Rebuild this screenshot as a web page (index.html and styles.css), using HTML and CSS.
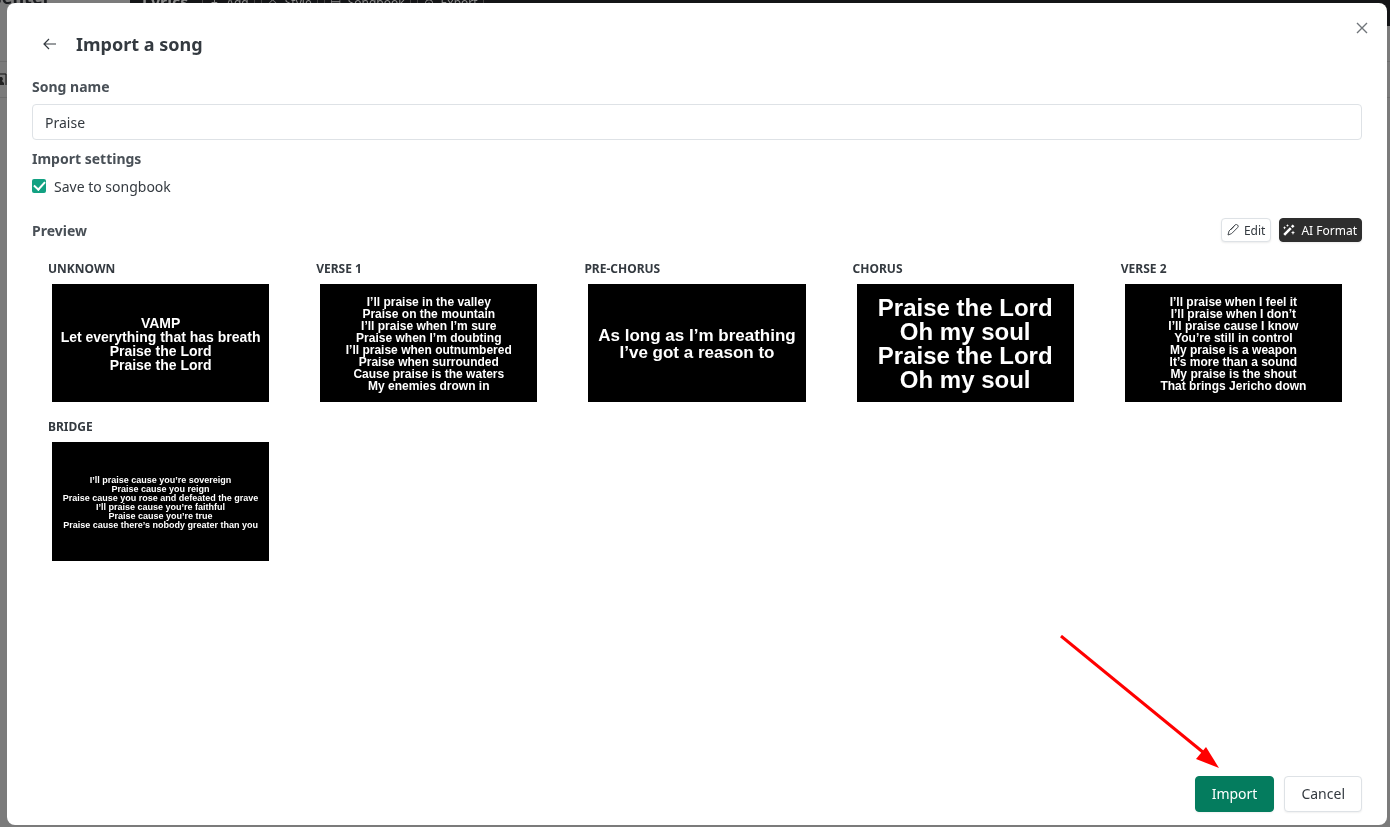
FILE: index.html
```html
<!DOCTYPE html>
<html lang="en">
<head>
  <meta charset="UTF-8">
  <meta name="viewport" content="width=device-width, initial-scale=1">
  <title>Import a song</title>
  <link rel="stylesheet" href="styles.css">
</head>

<body>

<!-- Page behind the dialog -->
<div class="page">
  <header class="topbar">
    <div class="brand">Presenter</div>
    <nav class="toolbar">
      <span class="toolbar-title">Lyrics</span>
      <button class="tool" type="button"><span>+</span>Add</button>
      <button class="tool" type="button"><span>◇</span>Style</button>
      <button class="tool" type="button"><span>▤</span>Songbook</button>
      <button class="tool" type="button"><span>⊙</span>Export</button>
    </nav>
  </header>
  <div class="side-row"></div>
  <div class="side-row side-row-icon">
    <svg width="7" height="14" viewBox="0 0 7 14"><path d="M0 1h6v11" fill="none" stroke="#111"/><path d="M0 4h2l1 2-1 2 2 2v2H0z" fill="#222"/></svg>
  </div>
</div>

<!-- Import dialog -->
<main class="modal" role="dialog" aria-labelledby="modalTitle">
  <button class="close-btn" type="button" aria-label="Close">
    <svg width="12" height="12" viewBox="0 0 12 12"><path d="M1 1l10 10M11 1L1 11"/></svg>
  </button>

  <header class="modal-header">
    <button class="back-btn" type="button" aria-label="Back">
      <svg width="14" height="12" viewBox="0 0 14 12"><path d="M13 6H1M6 1L1 6l5 5"/></svg>
    </button>
    <h1 id="modalTitle">Import a song</h1>
  </header>

  <label class="field-label" for="songName">Song name</label>
  <input class="text-input" type="text" id="songName" value="Praise">

  <h2 class="field-label settings-label">Import settings</h2>
  <div class="check-row">
    <input type="checkbox" id="saveSongbook" checked>
    <label for="saveSongbook">Save to songbook</label>
  </div>

  <div class="preview-header">
    <h2 class="field-label">Preview</h2>
    <div class="preview-actions">
      <button class="btn-small" type="button">
        <svg width="12" height="12" viewBox="0 0 12 12"><path d="M1 11l1-4 6-6a1.600 1.600 0 0 1 2.600 2.600l-6 6zM7 2.500L3.500 6" fill="none" stroke="currentColor" stroke-width=".9" stroke-linejoin="round"/></svg>
        Edit
      </button>
      <button class="btn-small btn-dark" type="button">
        <svg width="12" height="12" viewBox="0 0 12 12"><path d="M1.200 10.800l6.600-6.600M8.800 3.200l1.800-1.800" fill="none" stroke="currentColor" stroke-width="2.600"/><path d="M4.500 0l.4 1.100 1.100.4-1.100.4-.4 1.100-.4-1.100L3 1.500l1.100-.4zM1.500 2l.5 1.300 1.300.5-1.300.5-.5 1.300L1 4.300l-1-.5 1-.5zM10 6.500l.6 1.600 1.400.6-1.400.6-.6 1.600-.6-1.600L8 8.700l1.400-.6z" fill="currentColor"/></svg>
        AI Format
      </button>
    </div>
  </div>

  <section class="slides">
    <article class="card">
      <h3>UNKNOWN</h3>
      <div class="slide size-m">VAMP<br>Let everything that has breath<br>Praise the Lord<br>Praise the Lord</div>
    </article>
    <article class="card">
      <h3>VERSE 1</h3>
      <div class="slide size-s">I’ll praise in the valley<br>Praise on the mountain<br>I’ll praise when I’m sure<br>Praise when I’m doubting<br>I’ll praise when outnumbered<br>Praise when surrounded<br>Cause praise is the waters<br>My enemies drown in</div>
    </article>
    <article class="card">
      <h3>PRE-CHORUS</h3>
      <div class="slide size-l">As long as I’m breathing<br>I’ve got a reason to</div>
    </article>
    <article class="card">
      <h3>CHORUS</h3>
      <div class="slide size-xl">Praise the Lord<br>Oh my soul<br>Praise the Lord<br>Oh my soul</div>
    </article>
    <article class="card">
      <h3>VERSE 2</h3>
      <div class="slide size-s">I’ll praise when I feel it<br>I’ll praise when I don’t<br>I’ll praise cause I know<br>You’re still in control<br>My praise is a weapon<br>It’s more than a sound<br>My praise is the shout<br>That brings Jericho down</div>
    </article>
    <article class="card">
      <h3>BRIDGE</h3>
      <div class="slide size-xs">I’ll praise cause you’re sovereign<br>Praise cause you reign<br>Praise cause you rose and defeated the grave<br>I’ll praise cause you’re faithful<br>Praise cause you’re true<br>Praise cause there’s nobody greater than you</div>
    </article>
  </section>

  <footer class="modal-footer">
    <button class="btn btn-primary" type="button">Import</button>
    <button class="btn" type="button">Cancel</button>
  </footer>

  <!-- Pointer to the Import button -->
  <svg class="arrow" width="160" height="134" viewBox="0 0 160 134">
    <path d="M1 1L144 118" stroke="#f00" stroke-width="3"/>
    <path d="M159 133l-23-9 10-12z" fill="#f00"/>
  </svg>
</main>

</body>
</html>
```

FILE: styles.css
```css
* {
  box-sizing: border-box;
}
body {
  margin: 0;
  min-height: 100vh;
  font-family: "Noto Sans", sans-serif;
  font-size: 14px;
  color: #343a40;
  background: #7b7b7b;
  overflow: hidden;
}
h1, h2, h3 {
  margin: 0;
}
button, input {
  font-family: inherit;
}

/* Dimmed page, scrolled a little under the dialog */
.page {
  position: fixed;
  inset: 0;
  overflow: hidden;
}
.topbar {
  display: flex;
  height: 38px;
  margin-top: -12px;
  background: #141517;
}
.brand {
  width: 130px;
  background: #7b7b7b;
  color: #1a1b1e;
  font-size: 18px;
  line-height: 18px;
  font-weight: 700;
  text-indent: -37px;
}
.toolbar {
  display: flex;
  gap: 6px;
  padding-left: 12px;
  align-items: flex-start;
}
.toolbar-title {
  color: #8a8a8a;
  font-weight: 700;
  font-size: 16px;
  line-height: 28px;
  margin-right: 8px;
}
.tool {
  display: flex;
  align-items: center;
  gap: 6px;
  height: 28px;
  padding: 0 5px;
  background: none;
  border: 1px solid #444;
  color: #8a8a8a;
  font-size: 12px;
}
.tool span {
  width: 12px;
}
.side-row {
  height: 36px;
  border-bottom: 1px solid #6e6e6e;
}
.side-row-icon {
  display: flex;
  align-items: center;
}

/* Dialog */
.modal {
  position: fixed;
  inset: 3px 3px 2px 7px;
  display: flex;
  flex-direction: column;
  padding: 23px 25px 13px;
  background: #fff;
  border-radius: 8px;
}
.close-btn {
  position: absolute;
  top: 14px;
  right: 14px;
  display: flex;
  padding: 5px;
  border: none;
  background: none;
  cursor: pointer;
}
.close-btn svg, .back-btn svg {
  fill: none;
  stroke: #70757a;
  stroke-width: 1.4;
}
.back-btn svg {
  stroke: #343a40;
  stroke-width: 1.2;
}
.modal-header {
  display: flex;
  align-items: center;
  gap: 8px;
  height: 36px;
  margin-bottom: 13px;
}
.back-btn {
  display: flex;
  align-items: center;
  justify-content: center;
  width: 36px;
  height: 36px;
  padding: 0;
  border: none;
  background: none;
  cursor: pointer;
}
.modal-header h1 {
  font-size: 18px;
  line-height: 28px;
}
.field-label {
  font-size: 14px;
  line-height: 24px;
  font-weight: 700;
  color: #495057;
}
.text-input {
  height: 36px;
  margin-top: 5px;
  padding: 0 12px;
  border: 1px solid #dee2e6;
  border-radius: 4px;
  font-size: 14px;
  color: #343a40;
}
.settings-label {
  margin-top: 7px;
}
.check-row {
  display: flex;
  align-items: center;
  gap: 8px;
  height: 30px;
}
.check-row input {
  appearance: none;
  width: 14px;
  height: 14px;
  margin: 0;
  border-radius: 2px;
  background: #12a182;
  display: grid;
  place-items: center;
}
.check-row input:checked::before {
  content: "";
  width: 9px;
  height: 5px;
  margin-bottom: 4px;
  border-left: 2px solid #fff;
  border-bottom: 2px solid #fff;
  transform: rotate(-48deg);
}
.preview-header {
  display: flex;
  align-items: flex-end;
  justify-content: space-between;
  height: 25px;
  margin-top: 17px;
}
.preview-actions {
  display: flex;
  gap: 8px;
  align-self: flex-start;
}
.btn-small {
  display: flex;
  align-items: center;
  gap: 5px;
  height: 24px;
  padding: 0 5px;
  border: 1px solid #dee2e6;
  border-radius: 4px;
  background: #fff;
  color: #343a40;
  font-size: 12px;
  box-shadow: 0 1px 2px rgba(0,0,0,0.08);
  cursor: pointer;
}
.btn-dark {
  padding: 0 4px 0 3px;
  gap: 6px;
  background: #2e2e2e;
  border-color: #2e2e2e;
  color: #fff;
}

/* Slides */
.slides {
  display: grid;
  grid-template-columns: repeat(5, 1fr);
  gap: 15px 43px;
  padding: 16px;
}
.card h3 {
  font-size: 12px;
  line-height: 20px;
  color: #343a40;
}
.slide {
  display: grid;
  align-content: center;
  aspect-ratio: 11 / 6;
  margin: 5px 4px 0;
  padding-top: 2px;
  background: #000;
  color: #fff;
  font-family: "Liberation Sans", sans-serif;
  font-weight: 700;
  text-align: center;
  white-space: nowrap;
}
.size-xs {
  font-size: 9px;
  line-height: 9px;
}
.size-s {
  font-size: 12px;
  line-height: 12px;
}
.size-m {
  font-size: 14px;
  line-height: 14px;
}
.size-l {
  font-size: 17px;
  line-height: 17px;
}
.size-xl {
  font-size: 24px;
  line-height: 24px;
}

/* Footer */
.modal-footer {
  display: flex;
  justify-content: flex-end;
  gap: 10px;
  margin-top: auto;
}
.btn {
  height: 36px;
  padding: 0 16px 2px;
  border: 1px solid #dee2e6;
  border-radius: 4px;
  background: #fff;
  color: #343a40;
  font-size: 14px;
  box-shadow: 0 1px 2px rgba(0,0,0,0.06);
  cursor: pointer;
}
.btn-primary {
  background: #047c5e;
  border-color: #047c5e;
  color: #fff;
}
.arrow {
  position: absolute;
  right: 167px;
  bottom: 56px;
  pointer-events: none;
}
```
